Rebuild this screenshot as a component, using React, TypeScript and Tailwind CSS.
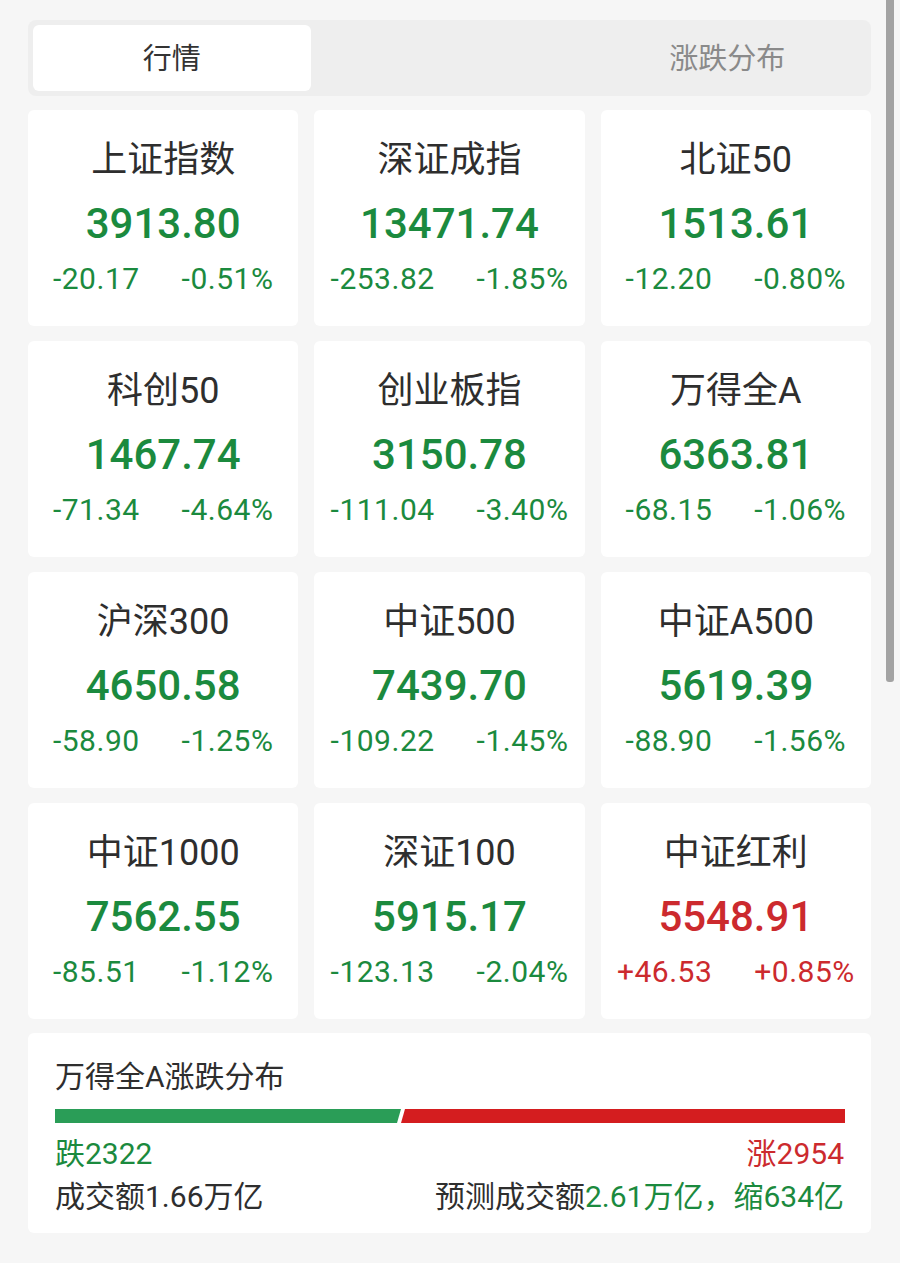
import React from "react";

type Item = { name: string; value: string; chg: string; pct: string; up?: boolean };

const items: Item[] = [
  { name: "上证指数", value: "3913.80", chg: "-20.17", pct: "-0.51%" },
  { name: "深证成指", value: "13471.74", chg: "-253.82", pct: "-1.85%" },
  { name: "北证50", value: "1513.61", chg: "-12.20", pct: "-0.80%" },
  { name: "科创50", value: "1467.74", chg: "-71.34", pct: "-4.64%" },
  { name: "创业板指", value: "3150.78", chg: "-111.04", pct: "-3.40%" },
  { name: "万得全A", value: "6363.81", chg: "-68.15", pct: "-1.06%" },
  { name: "沪深300", value: "4650.58", chg: "-58.90", pct: "-1.25%" },
  { name: "中证500", value: "7439.70", chg: "-109.22", pct: "-1.45%" },
  { name: "中证A500", value: "5619.39", chg: "-88.90", pct: "-1.56%" },
  { name: "中证1000", value: "7562.55", chg: "-85.51", pct: "-1.12%" },
  { name: "深证100", value: "5915.17", chg: "-123.13", pct: "-2.04%" },
  { name: "中证红利", value: "5548.91", chg: "+46.53", pct: "+0.85%", up: true },
];

const FONT = { fontFamily: 'Roboto, "Noto Sans CJK SC", sans-serif' };

function Card({ it }: { it: Item }) {
  const color = it.up ? "text-[#cc2a2e]" : "text-[#1b8a3e]";
  return (
    <div className="bg-white rounded-[6px] h-[216px] flex flex-col items-center pt-[30px]">
      <div className="text-[36px] leading-[40px] text-[#2e2e2e]">{it.name}</div>
      <div className={`mt-[19px] text-[42px] leading-[50px] font-medium ${color}`}>{it.value}</div>
      <div className={`mt-[12px] text-[30px] leading-[36px] tracking-[0.5px] flex justify-center gap-[42px] ${color}`}>
        <span>{it.chg}</span>
        <span>{it.pct}</span>
      </div>
    </div>
  );
}

export default function App() {
  return (
    <div className="relative w-[900px] h-[1263px] bg-[#f6f6f6] overflow-hidden" style={FONT}>
      <div className="pl-[28px] pr-[29px] pt-[20px]">
        <div className="bg-[#eeeeee] rounded-[8px] p-[5px] grid grid-cols-3 h-[76px]">
          <div className="bg-white rounded-[6px] flex items-center justify-center pt-[3px] text-[29px] text-[#333333]">行情</div>
          <div />
          <div className="flex items-center justify-center pt-[3px] text-[29px] text-[#8a8a8a]">涨跌分布</div>
        </div>

        <div className="mt-[14px] grid grid-cols-3 gap-x-[16px] gap-y-[15px]">
          {items.map((it) => (
            <Card key={it.name} it={it} />
          ))}
        </div>

        <div className="mt-[14px] bg-white rounded-[6px] h-[200px] px-[27px] pt-[26px]">
          <div className="text-[30px] leading-[36px] text-[#2e2e2e]">万得全A涨跌分布</div>
          <svg className="mt-[14px] block" width="790" height="14" viewBox="0 0 790 14">
            <polygon points="0,0 346,0 342,14 0,14" fill="#2a9d57" />
            <polygon points="350,0 790,0 790,14 346,14" fill="#d41d1f" />
          </svg>
          <div className="mt-[13px] flex justify-between text-[30px] leading-[36px]">
            <span className="text-[#1b8a3e]">跌2322</span>
            <span className="text-[#cc2a2e]">涨2954</span>
          </div>
          <div className="mt-[7px] flex justify-between text-[30px] leading-[36px] text-[#2e2e2e]">
            <span>成交额1.66万亿</span>
            <span>
              预测成交额<span className="text-[#1b8a3e]">2.61万亿，缩634亿</span>
            </span>
          </div>
        </div>
      </div>
      <div className="absolute right-[6px] top-0 w-[8px] h-[682px] bg-[#a3a3a3] rounded-b-[3px]" />
    </div>
  );
}
